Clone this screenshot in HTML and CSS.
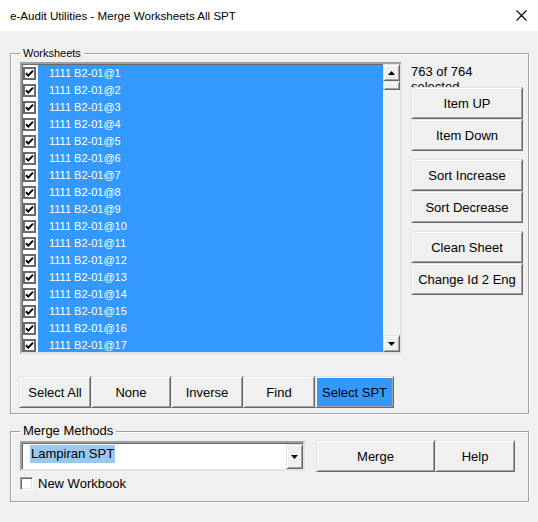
FILE: index.html
```html
<!DOCTYPE html>
<html>
<head>
<meta charset="utf-8">
<title>e-Audit Utilities - Merge Worksheets All SPT</title>
<link rel="stylesheet" href="styles.css">
</head>
<body>
<div class="window">
  <div class="titlebar">
    <span class="title">e-Audit Utilities - Merge Worksheets All SPT</span>
    <svg class="close" width="11" height="11" viewBox="0 0 11 11"><path d="M0.5 0.5L10.5 10.5M10.5 0.5L0.5 10.5" stroke="#000" stroke-width="1.1" fill="none"/></svg>
  </div>
  <div class="client">
    <fieldset class="group group-sheets">
      <legend class="legend-small">Worksheets</legend>
      <div class="sheets-body">
        <div class="sheets-row">
          <div class="listbox">
            <div class="list-items">
              <div class="row"><span class="chk"><svg width="13" height="13" viewBox="0 0 13 13"><rect x="1" y="1" width="11" height="11" fill="#fff" stroke="#6a6a6a" stroke-width="2"/><path d="M3 6.2L5.3 8.6L10 3.6" fill="none" stroke="#000" stroke-width="2"/></svg></span><span class="item">1111 B2-01@1</span></div>
              <div class="row"><span class="chk"><svg width="13" height="13" viewBox="0 0 13 13"><rect x="1" y="1" width="11" height="11" fill="#fff" stroke="#6a6a6a" stroke-width="2"/><path d="M3 6.2L5.3 8.6L10 3.6" fill="none" stroke="#000" stroke-width="2"/></svg></span><span class="item">1111 B2-01@2</span></div>
              <div class="row"><span class="chk"><svg width="13" height="13" viewBox="0 0 13 13"><rect x="1" y="1" width="11" height="11" fill="#fff" stroke="#6a6a6a" stroke-width="2"/><path d="M3 6.2L5.3 8.6L10 3.6" fill="none" stroke="#000" stroke-width="2"/></svg></span><span class="item">1111 B2-01@3</span></div>
              <div class="row"><span class="chk"><svg width="13" height="13" viewBox="0 0 13 13"><rect x="1" y="1" width="11" height="11" fill="#fff" stroke="#6a6a6a" stroke-width="2"/><path d="M3 6.2L5.3 8.6L10 3.6" fill="none" stroke="#000" stroke-width="2"/></svg></span><span class="item">1111 B2-01@4</span></div>
              <div class="row"><span class="chk"><svg width="13" height="13" viewBox="0 0 13 13"><rect x="1" y="1" width="11" height="11" fill="#fff" stroke="#6a6a6a" stroke-width="2"/><path d="M3 6.2L5.3 8.6L10 3.6" fill="none" stroke="#000" stroke-width="2"/></svg></span><span class="item">1111 B2-01@5</span></div>
              <div class="row"><span class="chk"><svg width="13" height="13" viewBox="0 0 13 13"><rect x="1" y="1" width="11" height="11" fill="#fff" stroke="#6a6a6a" stroke-width="2"/><path d="M3 6.2L5.3 8.6L10 3.6" fill="none" stroke="#000" stroke-width="2"/></svg></span><span class="item">1111 B2-01@6</span></div>
              <div class="row"><span class="chk"><svg width="13" height="13" viewBox="0 0 13 13"><rect x="1" y="1" width="11" height="11" fill="#fff" stroke="#6a6a6a" stroke-width="2"/><path d="M3 6.2L5.3 8.6L10 3.6" fill="none" stroke="#000" stroke-width="2"/></svg></span><span class="item">1111 B2-01@7</span></div>
              <div class="row"><span class="chk"><svg width="13" height="13" viewBox="0 0 13 13"><rect x="1" y="1" width="11" height="11" fill="#fff" stroke="#6a6a6a" stroke-width="2"/><path d="M3 6.2L5.3 8.6L10 3.6" fill="none" stroke="#000" stroke-width="2"/></svg></span><span class="item">1111 B2-01@8</span></div>
              <div class="row"><span class="chk"><svg width="13" height="13" viewBox="0 0 13 13"><rect x="1" y="1" width="11" height="11" fill="#fff" stroke="#6a6a6a" stroke-width="2"/><path d="M3 6.2L5.3 8.6L10 3.6" fill="none" stroke="#000" stroke-width="2"/></svg></span><span class="item">1111 B2-01@9</span></div>
              <div class="row"><span class="chk"><svg width="13" height="13" viewBox="0 0 13 13"><rect x="1" y="1" width="11" height="11" fill="#fff" stroke="#6a6a6a" stroke-width="2"/><path d="M3 6.2L5.3 8.6L10 3.6" fill="none" stroke="#000" stroke-width="2"/></svg></span><span class="item">1111 B2-01@10</span></div>
              <div class="row"><span class="chk"><svg width="13" height="13" viewBox="0 0 13 13"><rect x="1" y="1" width="11" height="11" fill="#fff" stroke="#6a6a6a" stroke-width="2"/><path d="M3 6.2L5.3 8.6L10 3.6" fill="none" stroke="#000" stroke-width="2"/></svg></span><span class="item">1111 B2-01@11</span></div>
              <div class="row"><span class="chk"><svg width="13" height="13" viewBox="0 0 13 13"><rect x="1" y="1" width="11" height="11" fill="#fff" stroke="#6a6a6a" stroke-width="2"/><path d="M3 6.2L5.3 8.6L10 3.6" fill="none" stroke="#000" stroke-width="2"/></svg></span><span class="item">1111 B2-01@12</span></div>
              <div class="row"><span class="chk"><svg width="13" height="13" viewBox="0 0 13 13"><rect x="1" y="1" width="11" height="11" fill="#fff" stroke="#6a6a6a" stroke-width="2"/><path d="M3 6.2L5.3 8.6L10 3.6" fill="none" stroke="#000" stroke-width="2"/></svg></span><span class="item">1111 B2-01@13</span></div>
              <div class="row"><span class="chk"><svg width="13" height="13" viewBox="0 0 13 13"><rect x="1" y="1" width="11" height="11" fill="#fff" stroke="#6a6a6a" stroke-width="2"/><path d="M3 6.2L5.3 8.6L10 3.6" fill="none" stroke="#000" stroke-width="2"/></svg></span><span class="item">1111 B2-01@14</span></div>
              <div class="row"><span class="chk"><svg width="13" height="13" viewBox="0 0 13 13"><rect x="1" y="1" width="11" height="11" fill="#fff" stroke="#6a6a6a" stroke-width="2"/><path d="M3 6.2L5.3 8.6L10 3.6" fill="none" stroke="#000" stroke-width="2"/></svg></span><span class="item">1111 B2-01@15</span></div>
              <div class="row"><span class="chk"><svg width="13" height="13" viewBox="0 0 13 13"><rect x="1" y="1" width="11" height="11" fill="#fff" stroke="#6a6a6a" stroke-width="2"/><path d="M3 6.2L5.3 8.6L10 3.6" fill="none" stroke="#000" stroke-width="2"/></svg></span><span class="item">1111 B2-01@16</span></div>
              <div class="row"><span class="chk"><svg width="13" height="13" viewBox="0 0 13 13"><rect x="1" y="1" width="11" height="11" fill="#fff" stroke="#6a6a6a" stroke-width="2"/><path d="M3 6.2L5.3 8.6L10 3.6" fill="none" stroke="#000" stroke-width="2"/></svg></span><span class="item">1111 B2-01@17</span></div>
            </div>
            <div class="vscroll">
              <div class="sb-btn"><svg width="7" height="4" viewBox="0 0 7 4"><path d="M0 4H7L3.5 0Z" fill="#000"/></svg></div>
              <div class="sb-thumb"></div>
              <div class="sb-track"></div>
              <div class="sb-btn"><svg width="7" height="4" viewBox="0 0 7 4"><path d="M0 0H7L3.5 4Z" fill="#000"/></svg></div>
            </div>
          </div>
          <div class="side">
            <div class="count">763 of 764<br>selected</div>
            <div class="btn-pair">
              <button class="btn side-btn">Item UP</button>
              <button class="btn side-btn">Item Down</button>
            </div>
            <div class="btn-pair">
              <button class="btn side-btn">Sort Increase</button>
              <button class="btn side-btn">Sort Decrease</button>
            </div>
            <div class="btn-pair">
              <button class="btn side-btn">Clean Sheet</button>
              <button class="btn side-btn">Change Id 2 Eng</button>
            </div>
          </div>
        </div>
        <div class="select-row">
          <button class="btn sel-all">Select All</button>
          <button class="btn sel-none">None</button>
          <button class="btn sel-inv">Inverse</button>
          <button class="btn sel-find">Find</button>
          <button class="btn sel-spt active">Select SPT</button>
        </div>
      </div>
    </fieldset>
    <fieldset class="group group-merge">
      <legend class="legend-big">Merge Methods</legend>
      <div class="merge-body">
        <div class="merge-row">
          <div class="combo">
            <div class="combo-text"><span class="combo-sel">Lampiran SPT</span></div>
            <div class="combo-drop"><svg width="7" height="4" viewBox="0 0 7 4"><path d="M0 0H7L3.5 4Z" fill="#000"/></svg></div>
          </div>
          <button class="btn merge-btn">Merge</button>
          <button class="btn help-btn">Help</button>
        </div>
        <label class="check-row"><span class="cb"></span><span class="cb-label">New Workbook</span></label>
      </div>
    </fieldset>
  </div>
</div>
</body>
</html>
```

FILE: styles.css
```css
* {
  box-sizing: border-box;
}

html, body {
  margin: 0;
  padding: 0;
  background: #f0f0f0;
}

body {
  font-family: "Liberation Sans", Arial, sans-serif;
  color: #000;
}

.window {
  width: 538px;
  height: 522px;
  background: #f0f0f0;
  overflow: hidden;
}

.titlebar {
  height: 31px;
  background: #fff;
  display: flex;
  align-items: center;
  justify-content: space-between;
  padding: 0 11px 0 10px;
}

.title {
  font-size: 11.6px;
  line-height: 14px;
  color: #000;
  margin-top: 1px;
}

.close {
  display: block;
}

.client {
  padding: 0 0 0 10px;
}

.group {
  margin: 0;
  padding: 0;
  width: 519px;
  border: 1px solid #a0a0a0;
  box-shadow: inset 1px 1px #fff, 1px 1px #fff;
  min-width: 0;
}

.group-sheets {
  margin-top: 15px;
}

.group-merge {
  margin-top: 9px;
}

.legend-small {
  margin-left: 9px;
  padding: 0 3px;
  font-size: 11px;
  line-height: 14px;
}

.legend-big {
  margin-left: 9px;
  padding: 0 3px;
  font-size: 13px;
  line-height: 16px;
}

.sheets-body {
  padding: 2px 0 5px 9px;
}

.sheets-row {
  display: flex;
  align-items: flex-start;
}

.listbox {
  width: 382px;
  height: 292px;
  display: flex;
  border: 2px solid;
  border-color: #a0a0a0 #e3e3e3 #e3e3e3 #a0a0a0;
  box-shadow: inset 1px 1px #696969;
  background: #fff;
  overflow: hidden;
}

.list-items {
  flex: 1;
  display: flex;
  flex-direction: column;
  overflow: hidden;
  margin: 1px 0 0 1px;
}

.row {
  flex: none;
  height: 17px;
  display: flex;
}

.chk {
  flex: none;
  width: 15px;
  background: #fff;
  display: flex;
  align-items: center;
  padding-left: 0;
}

.chk svg {
  display: block;
}

.item {
  flex: 1;
  background: #3399ff;
  color: #fff;
  font-size: 11px;
  line-height: 17px;
  padding-left: 11px;
  white-space: nowrap;
}

.vscroll {
  flex: none;
  width: 17px;
  display: flex;
  flex-direction: column;
  margin-top: 0;
}

.sb-btn {
  flex: none;
  height: 17px;
  display: flex;
  align-items: center;
  justify-content: center;
  background: #f0f0f0;
  border: 1px solid;
  border-color: #e3e3e3 #696969 #696969 #e3e3e3;
  box-shadow: inset 1px 1px #fff, inset -1px -1px #a0a0a0;
}

.sb-thumb {
  flex: none;
  height: 9px;
  background: #f0f0f0;
  border: 1px solid;
  border-color: #e3e3e3 #696969 #696969 #e3e3e3;
  box-shadow: inset 1px 1px #fff, inset -1px -1px #a0a0a0;
}

.sb-track {
  flex: 1;
  background-color: #f4f4f4;
  background-image: repeating-conic-gradient(#ffffff 0 25%, #e6e6e6 0 50%);
  background-size: 2px 2px;
}

.side {
  width: 112px;
  margin-left: 9px;
  margin-top: 2px;
  display: flex;
  flex-direction: column;
}

.count {
  height: 23px;
  overflow: hidden;
  font-size: 13px;
  line-height: 15px;
  padding-left: 0;
}

.btn-pair {
  display: flex;
  flex-direction: column;
}

.btn-pair + .btn-pair {
  margin-top: 8px;
}

.btn {
  font-family: "Liberation Sans", Arial, sans-serif;
  font-size: 13px;
  color: #000;
  background: #f0f0f0;
  border: 1px solid;
  border-color: #e3e3e3 #696969 #696969 #e3e3e3;
  box-shadow: inset 1px 1px #fff, inset -1px -1px #a0a0a0;
  padding: 0;
  margin: 0;
  height: 32px;
  border-radius: 0;
  text-align: center;
}

.side-btn {
  width: 112px;
}

.select-row {
  display: flex;
  margin-top: 22px;
  margin-left: -1px;
}

.sel-all { width: 72px; }
.sel-none { width: 80px; }
.sel-inv { width: 72px; }
.sel-find { width: 72px; }
.sel-spt { width: 79px; }

.btn.active {
  background: #3399ff;
}

.merge-body {
  padding: 1px 0 11px 9px;
}

.merge-row {
  display: flex;
  align-items: center;
}

.combo {
  width: 285px;
  height: 30px;
  display: flex;
  border: 2px solid;
  border-color: #a0a0a0 #e3e3e3 #e3e3e3 #a0a0a0;
  box-shadow: inset 1px 1px #696969;
  background: #fff;
  margin-right: 11px;
}

.combo-text {
  flex: 1;
  padding: 1px 0 0 8px;
}

.combo-sel {
  display: inline-block;
  background: #99c9ef;
  font-size: 13px;
  line-height: 18px;
  padding: 0 1px;
  color: #000;
}

.combo-drop {
  flex: none;
  width: 17px;
  display: flex;
  align-items: center;
  justify-content: center;
  background: #f0f0f0;
  border: 1px solid;
  border-color: #e3e3e3 #696969 #696969 #e3e3e3;
  box-shadow: inset 1px 1px #fff, inset -1px -1px #a0a0a0;
  margin: 1px 0 0 0;
}

.merge-btn { width: 119px; }
.help-btn { width: 80px; }

.check-row {
  display: flex;
  align-items: center;
  height: 13px;
  margin-top: 5px;
}

.cb {
  flex: none;
  width: 13px;
  height: 13px;
  background: #fff;
  border: 1px solid;
  border-color: #a0a0a0 #fff #fff #a0a0a0;
  box-shadow: inset 1px 1px #696969, inset -1px -1px #e3e3e3;
}

.cb-label {
  margin-left: 5px;
  font-size: 13px;
  line-height: 15px;
}
```
